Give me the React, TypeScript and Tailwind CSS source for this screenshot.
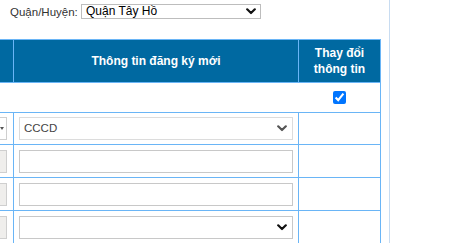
import React from "react";

function Chevron({ color = "#111" }: { color?: string }) {
    return (
        <svg width="10" height="7" viewBox="0 0 10 7" fill="none">
            <path d="M1.2 1.3 L5 5 L8.8 1.3" stroke={color} strokeWidth="2.2" strokeLinecap="round" strokeLinejoin="round" />
        </svg>
    );
}

function FakeSelect({ value, color, chevron, border }: { value: string; color: string; chevron: string; border: string }) {
    return (
        <div className={`flex h-[23px] w-full items-center justify-between border bg-white pl-[4px] pr-[5px] text-[11.5px] ${border}`}>
            <span className={color}>{value}</span>
            <Chevron color={chevron} />
        </div>
    );
}

function LeftStub({ white }: { white?: boolean }) {
    return (
        <div className={`flex h-[23px] w-[7px] items-center border border-l-0 border-[#cfcfcf] ${white ? "bg-white" : "bg-[#efeeec]"}`}>
            {white && <span className="block h-0 w-0 border-x-[2px] border-t-[3px] border-x-transparent border-t-[#555]"></span>}
        </div>
    );
}

export default function App() {
    const rows = [
        { h: "h-[32px]", stub: <LeftStub white />, field: <FakeSelect value="CCCD" color="text-[#444]" chevron="#555" border="border-[#dcdcdc]" /> },
        { h: "h-[33px]", stub: <LeftStub />, field: <div className="h-[23px] w-full border border-[#c8c8c8] bg-white"></div> },
        { h: "h-[33px]", stub: <LeftStub />, field: <div className="h-[23px] w-full border border-[#c8c8c8] bg-white"></div> },
        { h: "h-[33px]", stub: <LeftStub />, field: <FakeSelect value="" color="text-black" chevron="#111" border="border-[#c8c8c8]" /> },
    ];

    return (
        <div className="flex h-[243px] w-[452px] overflow-hidden bg-white font-['Liberation_Sans',Arial,sans-serif]">
            <div className="w-[390px] shrink-0 border-r border-[#c8dcf1]">
                <div className="flex h-[39px] items-start pl-[10px] pt-[4px]">
                    <span className="mt-[1px] w-[68px] text-[11.5px] leading-[15px] text-[#333]">Quận/Huyện:</span>
                    <div className="ml-[3px] flex h-[15px] w-[180px] items-center justify-between border border-[#bdbdbd] bg-white pl-[4px] pr-[4px]">
                        <span className="text-[12px] leading-[13px] text-black">Quận Tây Hồ</span>
                        <Chevron />
                    </div>
                </div>

                <div className="w-[381px] border-t border-[#6ab5f6]">
                    <div className="flex h-[43px] border-b border-[#6ab5f6] bg-[#0069a1] text-[12px] font-bold leading-[16px] text-white">
                        <div className="w-[14px] border-r border-[#6ab5f6]"></div>
                        <div className="flex w-[285px] items-center justify-center border-r border-[#6ab5f6]">Thông tin đăng ký mới</div>
                        <div className="flex w-[82px] items-center justify-center border-r border-[#6ab5f6] text-center">
                            Thay đổi
                            <br />
                            thông tin
                        </div>
                    </div>

                    <div className="flex h-[30px] border-b border-[#6ab5f6]">
                        <div className="w-[299px]"></div>
                        <div className="flex w-[82px] items-center justify-center border-r border-[#6ab5f6]">
                            <input type="checkbox" defaultChecked readOnly className="h-[13px] w-[13px] accent-[#0075ff]" />
                        </div>
                    </div>

                    {rows.map((r, i) => (
                        <div key={i} className={`flex ${r.h} border-b border-[#6ab5f6]`}>
                            <div className="flex w-[14px] items-center border-r border-[#6ab5f6]">{r.stub}</div>
                            <div className="flex w-[285px] items-center border-r border-[#6ab5f6] px-[5px]">{r.field}</div>
                            <div className="w-[82px] border-r border-[#6ab5f6]"></div>
                        </div>
                    ))}
                </div>
            </div>
        </div>
    );
}
